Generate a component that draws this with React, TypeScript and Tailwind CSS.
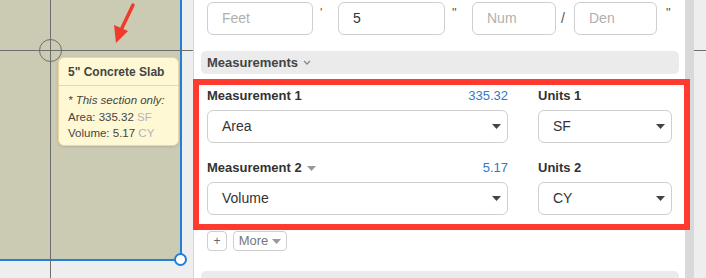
import React from 'react';

const font = { fontFamily: '"Liberation Sans", Arial, sans-serif' };

function Caret({ className = '' }: { className?: string }) {
  return (
    <svg width="9" height="5" viewBox="0 0 9 5" className={className}>
      <path d="M0 0 L9 0 L4.5 5 Z" fill="currentColor" />
    </svg>
  );
}

function Select({ value }: { value: string }) {
  return (
    <div className="h-[33px] rounded-[6px] border border-[#cfcfcf] bg-white flex items-center justify-between pl-[14px] pr-[6px] text-[14px] text-[#333]">
      <span>{value}</span>
      <Caret className="text-[#444]" />
    </div>
  );
}

function Field({ label, value, units, unitsLabel, labelCaret }: {
  label: string;
  value: string;
  units: string;
  unitsLabel: string;
  labelCaret?: boolean;
}) {
  return (
    <div className="flex gap-[30px]">
      <div className="w-[301px]">
        <div className="flex items-center justify-between h-[16px] mb-[6px]">
          <div className="flex items-center gap-[5px] text-[13px] font-bold text-[#333]">
            {label}
            {labelCaret && <Caret className="text-[#999]" />}
          </div>
          <span className="text-[13px] text-[#2f79cc]">{value}</span>
        </div>
        <Select value={units === 'SF' ? 'Area' : 'Volume'} />
      </div>
      <div className="w-[134px]">
        <div className="h-[16px] mb-[6px] flex items-center text-[13px] font-bold text-[#333]">{unitsLabel}</div>
        <Select value={units} />
      </div>
    </div>
  );
}

function TextInput({ width, placeholder, value }: { width: string; placeholder?: string; value?: string }) {
  return (
    <div className={`${width} h-[33px] rounded-[6px] border border-[#cfcfcf] bg-white flex items-center pl-[14px] text-[14px]`}>
      {value ? <span className="text-[#333]">{value}</span> : <span className="text-[#b0b0b0]">{placeholder}</span>}
    </div>
  );
}

export default function App() {
  return (
    <div className="relative w-[706px] h-[278px] overflow-hidden bg-[#eeeeee] flex" style={font}>
      {/* crosshair */}
      <div className="absolute left-[50px] top-0 w-px h-full bg-[#6e6e6e] z-[5]" />
      <div className="absolute left-0 top-[50px] h-px w-full bg-[#6e6e6e] z-[5]" />
      <div className="absolute left-[39px] top-[39px] w-[23px] h-[23px] rounded-full border border-[#6e6e6e] z-[5]" />

      {/* canvas */}
      <div className="w-[193px] shrink-0">
        <div className="w-[182px] h-[261px] bg-[#cbcab3] border-r-2 border-b-2 border-[#1f7fd9]" />
      </div>

      {/* red arrow annotation */}
      <svg className="absolute left-[108px] top-0 z-[6]" width="30" height="46" viewBox="0 0 30 46">
        <path d="M25 5 L13 30" stroke="#f23a2c" strokeWidth="3.5" strokeLinecap="round" />
        <path d="M8 43 L6 25 L20 31 Z" fill="#f23a2c" />
      </svg>

      {/* selection handle */}
      <div className="absolute left-[174px] top-[253px] w-[13px] h-[13px] rounded-full bg-white border-2 border-[#1f7fd9] z-[6]" />

      {/* tooltip */}
      <div className="absolute left-[58px] top-[57px] w-[121px] h-[89px] rounded-[6px] bg-[#fff8d4] border border-[#ecd7a4] shadow-sm z-20 text-[#444]">
        <div className="h-[27px] flex items-center pl-[9px] text-[12px] font-bold">5" Concrete Slab</div>
        <div className="border-t border-[#ecd7a4] pt-[6px] pl-[9px] text-[11.5px] leading-[16.5px]">
          <div className="italic">* This section only:</div>
          <div>Area: 335.32 <span className="text-[#b5b5b5]">SF</span></div>
          <div>Volume: 5.17 <span className="text-[#b5b5b5]">CY</span></div>
        </div>
      </div>

      {/* side panel */}
      <div className="relative z-10 flex w-[501px] shrink-0 h-full">
        <div className="w-[492px] h-full bg-white border-l border-[#d6d6d6] pl-[7px] pr-[6px] pt-[2px]">
          <div className="flex items-start pl-[6px]">
            <TextInput width="w-[106px]" placeholder="Feet" />
            <span className="w-[25px] pl-[7px] text-[13px] text-[#b44a3e] leading-[14px] pt-[4px]">'</span>
            <TextInput width="w-[107px]" value="5" />
            <span className="w-[27px] pl-[7px] text-[13px] text-[#555] leading-[14px] pt-[4px]">"</span>
            <TextInput width="w-[84px]" placeholder="Num" />
            <span className="w-[18px] pl-[5px] text-[14px] text-[#555] leading-[33px]">/</span>
            <TextInput width="w-[83px]" placeholder="Den" />
            <span className="pl-[9px] text-[13px] text-[#555] leading-[14px] pt-[4px]">"</span>
          </div>

          <div className="mt-[16px] h-[23px] rounded-[5px] bg-[#ebebeb] flex items-center pl-[6px] gap-[5px] text-[13px] font-bold text-[#444]">
            Measurements
            <svg width="8" height="5" viewBox="0 0 8 5"><path d="M1 1 L4 4 L7 1" stroke="#888" strokeWidth="1.3" fill="none" /></svg>
          </div>

          <div className="pl-[6px] pt-[14px] flex flex-col gap-[17px]">
            <Field label="Measurement 1" value="335.32" units="SF" unitsLabel="Units 1" />
            <Field label="Measurement 2" value="5.17" units="CY" unitsLabel="Units 2" labelCaret />
          </div>

          <div className="pl-[6px] mt-[16px] flex gap-[6px]">
            <div className="w-[20px] h-[20px] rounded-[4px] border border-[#cfcfcf] flex items-center justify-center text-[12px] text-[#666]">+</div>
            <div className="w-[54px] h-[20px] rounded-[4px] border border-[#cfcfcf] flex items-center justify-center gap-[4px] text-[13px] text-[#777]">
              More
              <Caret className="text-[#999]" />
            </div>
          </div>

          <div className="mt-[20px] h-[10px] rounded-t-[5px] bg-[#ebebeb]" />
        </div>
        <div className="w-[9px] h-full bg-[#d9d9d9]" />
      </div>

      {/* red highlight annotation */}
      <div className="absolute left-[193px] top-[79px] w-[497px] h-[151px] border-[6px] border-[#ff3b30] z-30 pointer-events-none" />
    </div>
  );
}
